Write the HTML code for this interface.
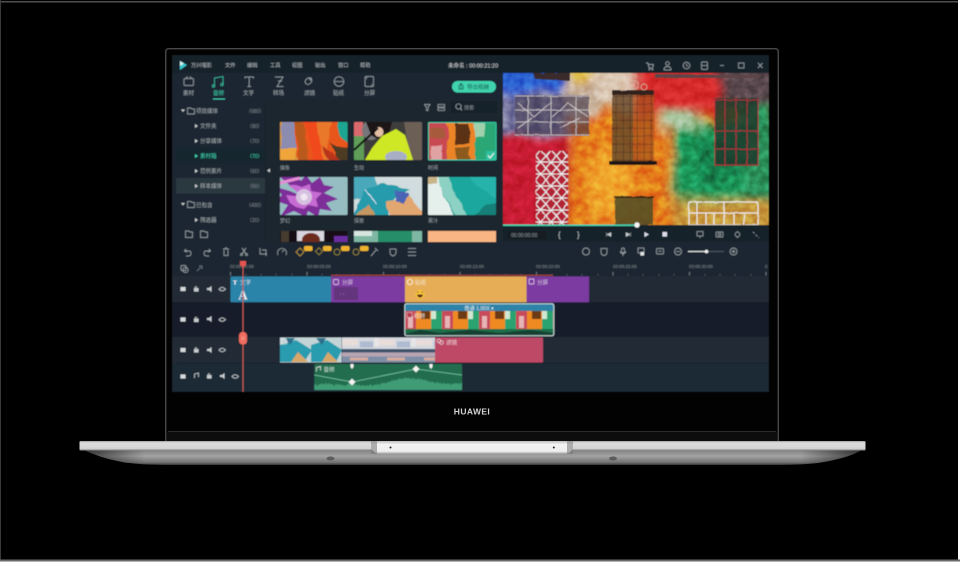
<!DOCTYPE html>
<html><head><meta charset="utf-8"><style>
html,body{margin:0;padding:0;background:#000;width:960px;height:566px;overflow:hidden}
svg{display:block;position:absolute;left:0;top:0}
text{font-family:"Liberation Sans","Noto Sans CJK SC",sans-serif}
.t{font-size:5.5px;fill:#a6aeb3}
.m{font-size:5.2px;fill:#b4bbc0}
.c{font-size:5px;fill:#7d878e}
.l{font-size:5.5px;fill:#e6e6e6}
.i{fill:none;stroke:#a3acb1;stroke-width:.7}
</style></head><body>
<svg width="960" height="566" viewBox="0 0 960 566" xmlns="http://www.w3.org/2000/svg">
<defs>
<filter id="b4" x="-30%" y="-30%" width="160%" height="160%"><feGaussianBlur stdDeviation="4.500"/></filter>
<filter id="s"><feGaussianBlur stdDeviation=".35"/></filter>
<filter id="soft" filterUnits="userSpaceOnUse" x="165" y="48" width="615" height="350"><feGaussianBlur stdDeviation=".42"/></filter>
<filter id="paint" filterUnits="userSpaceOnUse" x="490" y="60" width="290" height="175" color-interpolation-filters="sRGB"><feTurbulence type="fractalNoise" baseFrequency=".03" numOctaves="2" seed="4" result="n"/><feDisplacementMap in="SourceGraphic" in2="n" scale="16" xChannelSelector="R" yChannelSelector="G"/></filter>
<filter id="paintS" filterUnits="userSpaceOnUse" x="490" y="60" width="290" height="175" color-interpolation-filters="sRGB"><feTurbulence type="fractalNoise" baseFrequency=".15" numOctaves="1" seed="7" result="n"/><feDisplacementMap in="SourceGraphic" in2="n" scale="1.500" xChannelSelector="R" yChannelSelector="G"/></filter>
<filter id="mottle" filterUnits="userSpaceOnUse" x="503" y="73" width="266" height="152" color-interpolation-filters="sRGB"><feTurbulence type="fractalNoise" baseFrequency=".12" numOctaves="3" seed="11"/><feColorMatrix values="1.800 0 0 0 -.4  1.800 0 0 0 -.4  1.800 0 0 0 -.4  0 0 0 0 1"/></filter>
<filter id="thumb" filterUnits="userSpaceOnUse" x="270" y="115" width="235" height="105" color-interpolation-filters="sRGB"><feTurbulence type="fractalNoise" baseFrequency=".07" numOctaves="3" seed="3" result="n"/><feDisplacementMap in="SourceGraphic" in2="n" scale="6" xChannelSelector="R" yChannelSelector="G"/></filter>
<filter id="wave" filterUnits="userSpaceOnUse" x="310" y="360" width="156" height="34" color-interpolation-filters="sRGB"><feTurbulence type="fractalNoise" baseFrequency=".7 .05" numOctaves="2" seed="5" result="n"/><feDisplacementMap in="SourceGraphic" in2="n" scale="5" xChannelSelector="R" yChannelSelector="G"/></filter>
<clipPath id="pv"><rect x="503" y="73" width="266" height="152"/></clipPath>
<clipPath id="t1"><rect x="280" y="122" width="67.500" height="38" rx="1"/></clipPath>
<clipPath id="t2"><rect x="354" y="122" width="68" height="38" rx="1"/></clipPath>
<clipPath id="t3"><rect x="428" y="122" width="68" height="38" rx="1"/></clipPath>
<clipPath id="t4"><rect x="280" y="177" width="67.500" height="38" rx="1"/></clipPath>
<clipPath id="t5"><rect x="354" y="177" width="68" height="38" rx="1"/></clipPath>
<clipPath id="t6"><rect x="428" y="177" width="68" height="38" rx="1"/></clipPath>
<clipPath id="t7"><rect x="280" y="231" width="67.500" height="11"/></clipPath>
<clipPath id="c2"><rect x="405" y="304" width="149" height="31.500" rx="2"/></clipPath>
<clipPath id="c3a"><rect x="280" y="337.500" width="61.500" height="25"/></clipPath>
<clipPath id="c3b"><rect x="342" y="337.500" width="93" height="25"/></clipPath>
<clipPath id="wv"><rect x="314.300" y="364" width="147.700" height="26"/></clipPath>
<pattern id="iron" width="7" height="8" patternUnits="userSpaceOnUse"><path d="M0 0H7M0 0V8" stroke="#2a1c18" stroke-width=".8" fill="none"/></pattern>
<pattern id="lat" width="10.500" height="12" patternUnits="userSpaceOnUse"><rect width="10.500" height="12" fill="#b32434"/><path d="M0 0L5 6L0 12M10.500 0L5 6L10.500 12M0 6H10.500" stroke="#eee" stroke-width="1.100" fill="none"/></pattern>
<pattern id="fil" x="405" width="37" height="31" patternUnits="userSpaceOnUse">
<rect x="0" y="0" width="11" height="31" fill="#c8495a"/>
<rect x="11" y="0" width="15" height="31" fill="#ef8a24"/>
<rect x="16" y="1" width="9" height="8" fill="#6c3a16"/>
<rect x="26" y="0" width="11" height="31" fill="#2ba36f"/>
<rect x="26" y="0" width="5" height="9" fill="#cfe7d3"/>
<rect x="3" y="6" width="5" height="12" fill="#e6b4b4"/>
</pattern>
<pattern id="sky" width="37" height="25" patternUnits="userSpaceOnUse" x="342" y="337.500">
<rect width="37" height="12" fill="#d3d7df"/><rect y="2" width="16" height="6" fill="#e9dcd9"/><rect x="18" y="4" width="13" height="6" fill="#aebbd0"/><rect x="32" y="1" width="5" height="8" fill="#e6e4e6"/>
<rect y="11.500" width="37" height="3.500" fill="#3f526c"/><rect y="15" width="37" height="4" fill="#b7a5b3"/><rect y="19" width="37" height="6" fill="#7d8ea6"/><rect x="8" y="20" width="18" height="3" fill="#d9ab9f"/>
</pattern>
<linearGradient id="base" x1="0" y1="0" x2="0" y2="1"><stop offset="0" stop-color="#7c7c7c"/><stop offset=".45" stop-color="#a3a3a3"/><stop offset=".85" stop-color="#707070"/><stop offset="1" stop-color="#333"/></linearGradient>
<linearGradient id="baseH" x1="0" y1="0" x2="1" y2="0"><stop offset="0" stop-color="#000" stop-opacity=".65"/><stop offset=".08" stop-color="#000" stop-opacity="0"/><stop offset=".92" stop-color="#000" stop-opacity="0"/><stop offset="1" stop-color="#000" stop-opacity=".65"/></linearGradient>
<linearGradient id="strip" x1="0" y1="0" x2="0" y2="1"><stop offset="0" stop-color="#a0a0a0"/><stop offset=".2" stop-color="#dcdcdc"/><stop offset=".8" stop-color="#d4d4d4"/><stop offset="1" stop-color="#808080"/></linearGradient>
<linearGradient id="notch" x1="0" y1="0" x2="0" y2="1"><stop offset="0" stop-color="#bbb"/><stop offset=".25" stop-color="#f2f2f2"/><stop offset=".8" stop-color="#eee"/><stop offset="1" stop-color="#9a9a9a"/></linearGradient>
</defs>

<!-- page frame -->
<rect width="960" height="566" fill="#000"/>
<rect x="0" y="1" width="960" height="1.500" fill="#4e4e4e"/>
<rect x="0" y="0" width="1" height="561" fill="#3a3a3a"/>
<rect x="958" y="0" width="2" height="566" fill="#fff"/>
<rect x="0" y="559.500" width="960" height="2" fill="#6a6a6a"/>
<rect x="0" y="561.500" width="960" height="5" fill="#fff"/>

<!-- laptop lid -->
<path d="M165.700 441V52Q165.700 48.700 169 48.700H775Q778.300 48.700 778.300 52V441" fill="#020202" stroke="#484848" stroke-width="1.400"/>
<path d="M168 431.500H776" stroke="#2c2c2c" stroke-width="1"/>
<rect x="167" y="432" width="610" height="9" fill="#0d0d0d"/>
<text x="472" y="414.500" text-anchor="middle" font-size="8.500" font-weight="700" fill="#d4d4d4" letter-spacing=".4" filter="url(#s)">HUAWEI</text>

<!-- base -->
<g filter="url(#s)">
<path d="M82 449H863Q850 458 818 463Q800 465 780 465H165Q140 465 122 462Q100 458 82 449Z" fill="url(#base)"/>
<path d="M82 449H863Q850 458 818 463Q800 465 780 465H165Q140 465 122 462Q100 458 82 449Z" fill="url(#baseH)"/>
<rect x="79.500" y="441" width="786" height="9.500" rx="1" fill="url(#strip)"/>
<path d="M371 441H573V449L568 454H377L371 449Z" fill="url(#notch)"/>
<rect x="371" y="441" width="6" height="13" fill="#777" opacity=".55"/>
<rect x="567" y="441" width="6" height="13" fill="#777" opacity=".55"/>
<circle cx="390.500" cy="447.500" r="1" fill="#222"/>
<circle cx="553.800" cy="447.500" r="1" fill="#222"/>
<ellipse cx="330.500" cy="458.500" rx="4" ry="2" fill="#5c5c5c"/>
<ellipse cx="613" cy="458.500" rx="4" ry="2" fill="#5c5c5c"/>
</g>

<g filter="url(#soft)">
<!-- screen -->
<rect x="172" y="55" width="597" height="337" fill="#1b2731"/>
<rect x="172" y="55" width="597" height="18" fill="#18232c"/>
<rect x="172" y="73" width="331" height="169" fill="#1b2731"/>
<rect x="176" y="100" width="90" height="136" fill="#1c2832"/>
<rect x="265" y="100" width="238" height="142" fill="#1a252f"/>
<rect x="176" y="148" width="90" height="15.500" fill="#17262e"/>
<rect x="176" y="178" width="90" height="15.500" fill="#2c3841"/>

<!-- menu -->
<path d="M180 61L187 65L180 70Z" fill="#39c6ce"/><path d="M180 61L184 63.500L180 66Z" fill="#d9f3f2"/>
<text x="191" y="67" class="m">万兴喵影</text>
<text x="225" y="67" class="m">文件</text><text x="247" y="67" class="m">编辑</text><text x="270" y="67" class="m">工具</text><text x="292" y="67" class="m">视图</text><text x="315" y="67" class="m">输出</text><text x="338" y="67" class="m">窗口</text><text x="360" y="67" class="m">帮助</text>
<text x="448" y="67.500" font-size="5.500" fill="#d0d5d8">未命名 : 00:00:21:20</text>
<!-- window controls -->
<g class="i">
<path d="M646 63H648L649 68H652.500L653.500 64.500H648.500"/><circle cx="649.500" cy="69.500" r=".5"/><circle cx="652.500" cy="69.500" r=".5"/>
<circle cx="667.500" cy="63.500" r="1.800"/><path d="M664 70Q664 66.500 667.500 66.500T671 70Z"/>
<circle cx="686.500" cy="65.500" r="3.300"/><path d="M686.500 63.500V65.500L688 66.500"/>
<rect x="701.500" y="62" width="6" height="7.500" rx="1"/><path d="M701.500 65.500H707.500"/>
<path d="M720 65.500H724"/>
<rect x="738.500" y="63" width="5.500" height="5"/>
<path d="M758 63L762.500 68M762.500 63L758 68"/>
</g>

<!-- tabs -->
<g class="i">
<rect x="184" y="78.500" width="9.500" height="7" rx="1"/><path d="M186 78.500L187.500 76.500M191.500 78.500L190 76.500"/>
<path d="M214.500 86V78L223 76.500V84" stroke="#3fd0ae"/><circle cx="213.500" cy="86" r="1.200" stroke="#3fd0ae"/><circle cx="222" cy="84.500" r="1.200" stroke="#3fd0ae"/>
<path d="M245 78.500V77H253.500V78.500M249.200 77V86.500M247.500 86.500H251"/>
<path d="M275 77H283L277 86.500H283.500M278 81H282"/>
<rect x="305" y="78" width="7" height="5.500" rx="2.700" transform="rotate(-45 309 81)"/><circle cx="310.500" cy="79" r="1"/>
<circle cx="339" cy="81.500" r="4.800"/><path d="M334.500 81.500H343.500"/>
<rect x="365" y="76.500" width="8.500" height="10" rx="1"/><path d="M366.500 79V76.500M372 84V86.500"/>
</g>
<g class="t"><text x="183" y="95">素材</text><text x="213" y="95" style="fill:#3fd0ae">音频</text><text x="243" y="95">文字</text><text x="273" y="95">转场</text><text x="304" y="95">滤镜</text><text x="333" y="95">贴纸</text><text x="364" y="95">分屏</text></g>
<rect x="213" y="98.500" width="12" height="1" fill="#3fd0ae"/>
<rect x="452" y="81" width="44" height="11.500" rx="5.700" fill="#3fd3ae"/>
<path d="M459 85V89H463V85M461 88V83.500M459.500 85L461 83.500L462.500 85" fill="none" stroke="#103a34" stroke-width=".7"/>
<text x="467" y="89" font-size="5.500" fill="#123c36">导出视频</text>

<!-- sidebar -->
<path d="M181 109.500H185L183 112Z" fill="#c5cbce"/>
<path d="M187.500 108H191L192 109H194.500V114H187.500Z" class="i"/>
<text x="196" y="113" class="t">项目媒体</text><text x="246" y="113" class="c">（680）</text>
<path d="M195 124L198 126L195 128Z" fill="#c5cbce"/><text x="200" y="128" class="t">文件夹</text><text x="247" y="128" class="c">（80）</text>
<path d="M195 139L198 141L195 143Z" fill="#c5cbce"/><text x="200" y="143" class="t">分享媒体</text><text x="247" y="143" class="c">（70）</text>
<path d="M195 154L198 156L195 158Z" fill="#3fd0ae"/><text x="200" y="158" class="t" style="fill:#3fd0ae">素材箱</text><text x="247" y="158" class="c" style="fill:#3fd0ae">（70）</text>
<path d="M195 169L198 171L195 173Z" fill="#c5cbce"/><text x="200" y="173" class="t">范例素片</text><text x="247" y="173" class="c">（60）</text>
<path d="M195 184L198 186L195 188Z" fill="#c5cbce"/><text x="200" y="188" class="t">样本媒体</text><text x="247" y="188" class="c">（50）</text>
<path d="M181 203H185L183 205.500Z" fill="#c5cbce"/>
<path d="M187.500 201.500H191L192 202.500H194.500V207.500H187.500Z" class="i"/>
<text x="196" y="207" class="t">已包含</text><text x="246" y="207" class="c">（490）</text>
<path d="M195 218L198 220L195 222Z" fill="#c5cbce"/><text x="200" y="222" class="t">筛选器</text><text x="247" y="222" class="c">（20）</text>
<path d="M185.500 231H189L190 232H192.500V237.500H185.500Z" class="i"/><path d="M200.500 231H204L205 232H207.500V237.500H200.500Z" class="i"/>
<path d="M270 168.500L267 170.500L270 172.500Z" fill="#c5cbce"/>
<path d="M265.500 100V242" stroke="#151f28" stroke-width=".7"/>

<!-- media toolbar -->
<g class="i"><path d="M424.500 104.500H430L428 107.500V110.500H426.500V107.500Z"/><rect x="438" y="104.500" width="6.500" height="2.500"/><rect x="438" y="108" width="6.500" height="2.500"/></g>
<rect x="451" y="101" width="46" height="12" rx="1.500" fill="#17212a"/>
<circle cx="458.500" cy="106.500" r="2.700" class="i"/><path d="M460.500 108.500L462 110.500" class="i"/>
<text x="464" y="109.500" class="c" style="fill:#8d959a">搜索</text>

<!-- thumb 1 -->
<g clip-path="url(#t1)"><rect x="280" y="122" width="68" height="38" fill="#e8561e"/><g filter="url(#thumb)">
<rect x="270" y="115" width="90" height="50" fill="#e8561e"/>
<path d="M270 115H292L298 165H270Z" fill="#d89a3c"/>
<path d="M282 115H294L296 148L288 165H281Z" fill="#8c8cb0"/>
<path d="M292 115Q300 140 298 165H306Q308 138 300 115Z" fill="#b95a1b"/>
<path d="M300 115L330 115Q316 136 325 165H312Q312 138 300 115Z" fill="#f0481c"/>
<path d="M318 115H336Q322 136 332 165H326Q316 138 318 115Z" fill="#e9782a"/>
<path d="M328 140Q338 148 336 165H352V150Q336 146 328 140Z" fill="#4d3a20"/>
<path d="M336 115H352V150Q338 138 336 115Z" fill="#1aa590"/>
<path d="M322 146L347 165H330Z" fill="#b8351b"/>
<path d="M270 148H296L294 165H270Z" fill="#f0a53a"/>
</g></g>
<!-- thumb 2 -->
<g clip-path="url(#t2)"><g filter="url(#s)">
<rect x="354" y="122" width="68" height="38" fill="#3e3c3b"/>
<rect x="354" y="122" width="9" height="14" fill="#d9696d"/>
<rect x="354" y="136" width="10" height="24" fill="#5f9d59"/>
<path d="M404 122H422V160H410Z" fill="#6c5e56"/>
<ellipse cx="371" cy="130" rx="9" ry="10" fill="#77777a"/>
<path d="M366 122H392L388 138Q379 141 371 135Z" fill="#1a1214"/>
<ellipse cx="379" cy="132" rx="4.500" ry="5" fill="#e3bca4"/>
<path d="M365 160L372 148L382 136L396 129L405 135L413 160Z" fill="#cfe826"/>
<ellipse cx="396" cy="157" rx="11" ry="6" fill="#a8aec5"/>
<path d="M354 150L378 128" stroke="#111" stroke-width="2"/>
</g></g>
<!-- thumb 3 -->
<g clip-path="url(#t3)"><rect x="428" y="122" width="68" height="38" fill="#ea8426"/><g filter="url(#thumb)">
<rect x="445" y="115" width="32" height="50" fill="#ea8426"/>
<rect x="422" y="115" width="26" height="50" fill="#c94a52"/>
<rect x="430" y="128" width="14" height="10" fill="#a85a3c"/>
<rect x="455" y="124" width="14" height="20" fill="#5b3216"/>
<rect x="456" y="147" width="14" height="18" fill="#8b5a1f"/>
<rect x="475" y="115" width="27" height="50" fill="#2ba775"/>
<rect x="475" y="115" width="10" height="21" fill="#9fd1ad"/>
<rect x="431" y="145" width="11" height="20" fill="#e0a2a3"/>
</g>
<rect x="486" y="151" width="10" height="9" fill="#2ebf9e"/><path d="M488 155.500L490 158L494 153" fill="none" stroke="#fff" stroke-width="1"/></g>
<rect x="428.500" y="122.500" width="67.500" height="37.500" rx="1" fill="none" stroke="#35c8a7" stroke-width="1"/>
<!-- thumb 4 -->
<g clip-path="url(#t4)"><rect x="280" y="177" width="68" height="38" fill="#95bdc2"/><g filter="url(#s)">
<g transform="translate(304 197)">
<path d="M0 0L-24 -20L-15 -20L-10 -24L-3 -16L2 -22L8 -14L16 -20L20 -12L30 -10L20 -4L34 2L22 6L28 14L16 12L14 20L4 14L2 20L-10 14L-24 20L-16 8L-28 4L-22 -2L-28 -10L-14 -6Z" fill="#7e2f98"/>
<path d="M0 0L-16 -12L-8 -12L-2 -10L6 -13L7 -6L18 -4L12 2L14 10L4 8L0 12L-8 10L-14 6L-18 -2Z" fill="#c66cd2"/>
<circle r="8" fill="#d5c0e0"/><circle r="3.500" fill="#f0e6f2"/>
</g>
<path d="M280 183L300 178" stroke="#e48fd4" stroke-width="3"/>
</g></g>
<!-- thumb 5 -->
<g clip-path="url(#t5)"><rect x="354" y="177" width="68" height="38" fill="#d0dcdd"/><g filter="url(#thumb)">
<path d="M350 170H372L378 192L362 200L350 198Z" fill="#49a9ba"/>
<path d="M364 192Q376 180 396 186L410 190L394 198L386 220H350Z" fill="#269bab"/>
<path d="M386 202L408 194L428 220H392Z" fill="#e2a66f"/>
<path d="M396 190L410 194L404 204L396 200Z" fill="#4a63b5"/>
<path d="M350 220L368 204L378 220Z" fill="#c49763"/>
<path d="M366 190Q372 196 376 204" stroke="#eef" stroke-width="1.200" fill="none"/>
</g></g>
<!-- thumb 6 -->
<g clip-path="url(#t6)"><rect x="428" y="177" width="68" height="38" fill="#1ea79e"/><g filter="url(#thumb)">
<path d="M424 170H438Q442 196 456 220H424Z" fill="#e5efec"/>
<path d="M436 170H448Q452 192 470 220H458Q444 198 436 170Z" fill="#8cd1c3"/>
<path d="M424 170H436L438 184H428Z" fill="#c9b488"/>
<path d="M466 170H502V200Q480 196 466 170Z" fill="#27b3ab"/>
<path d="M470 220Q482 200 502 204V220Z" fill="#137f78"/>
</g></g>
<!-- thumb row 3 -->
<g clip-path="url(#t7)"><rect x="280" y="231" width="68" height="11" fill="#151018"/><rect x="281" y="231" width="8" height="11" fill="#453a2f"/><rect x="297" y="231" width="27" height="10" fill="#d8d5de"/><ellipse cx="311" cy="240" rx="9" ry="7" fill="#6c2c1c"/><rect x="334" y="236" width="14" height="6" fill="#6a2fa0"/></g>
<rect x="354" y="231" width="68" height="11" fill="#7fb7a5"/><rect x="378" y="231" width="34" height="11" fill="#1f8b63" opacity=".9"/><rect x="354" y="231" width="18" height="5" fill="#d6e6df"/>
<rect x="428" y="231" width="68" height="11" fill="#f9b684"/>
<g class="c"><text x="280" y="169.500" style="fill:#9ba3a8">抽象</text><text x="354" y="169.500" style="fill:#9ba3a8">生动</text><text x="428" y="169.500" style="fill:#9ba3a8">时间</text><text x="280" y="222.500" style="fill:#9ba3a8">梦幻</text><text x="354" y="222.500" style="fill:#9ba3a8">探索</text><text x="428" y="222.500" style="fill:#9ba3a8">果汁</text></g>

<!-- preview -->
<g clip-path="url(#pv)">
<rect x="503" y="73" width="266" height="152" fill="#dd7a22"/>
<g filter="url(#paint)"><g filter="url(#b4)">
<rect x="480" y="50" width="92" height="45" fill="#2a5fd0"/>
<rect x="480" y="92" width="90" height="45" fill="#7f7ea5"/>
<rect x="567" y="55" width="30" height="22" fill="#e5c445"/>
<rect x="592" y="55" width="46" height="55" fill="#dcc7b2"/>
<rect x="565" y="78" width="35" height="40" fill="#c9b29c"/>
<rect x="480" y="137" width="88" height="100" fill="#c81d30"/>
<rect x="634" y="55" width="88" height="60" fill="#d62c2a"/>
<rect x="718" y="55" width="70" height="50" fill="#59474e"/>
<rect x="568" y="118" width="104" height="120" fill="#e57e1f"/>
<rect x="590" y="150" width="40" height="70" fill="#f0a32a"/>
<rect x="672" y="122" width="105" height="85" fill="#1b9a5c"/>
<rect x="700" y="140" width="40" height="40" fill="#137a48"/>
<rect x="745" y="105" width="30" height="95" fill="#2a8f5a"/>
<rect x="670" y="200" width="105" height="35" fill="#c7983a"/>
<rect x="660" y="112" width="40" height="18" fill="#a9c8a0"/>
</g></g>
<rect x="503" y="73" width="266" height="152" filter="url(#mottle)" style="mix-blend-mode:overlay" opacity=".28"/>
<g filter="url(#paintS)">
<path d="M533 73H570L570 81L535 79Z" fill="#3a2c2a"/>
<rect x="515" y="95" width="74" height="41" fill="#3d344a" opacity=".6"/>
<path d="M515 96H589M515 110H589M515 122H589M515 135H589M551 96V135M528 96V135M576 96V135" stroke="#b9b4b8" stroke-width="1" fill="none"/>
<path d="M518 103L534 117L550 103M552 117L568 103L588 117M518 128L532 118M560 128L580 118" stroke="#d8cfd0" stroke-width=".8" fill="none"/>
<!-- w2 -->
<rect x="612" y="91" width="21" height="71" fill="#6a4a2a" opacity=".85"/>
<rect x="633" y="91" width="21" height="71" fill="#a8521e" opacity=".75"/>
<rect x="612" y="91" width="42" height="71" fill="url(#iron)"/>
<rect x="612" y="90" width="42" height="5" fill="#33231e"/>
<circle cx="622" cy="86" r="4" fill="none" stroke="#d6b7a1" stroke-width=".7"/><circle cx="634" cy="85" r="4.500" fill="none" stroke="#d6b7a1" stroke-width=".7"/><circle cx="644" cy="87" r="3" fill="none" stroke="#d6b7a1" stroke-width=".7"/>
<rect x="609" y="161" width="48" height="4" fill="#1d1516"/>
<!-- w3 -->
<rect x="715" y="98" width="43" height="68" fill="#1f3a2c" opacity=".85"/>
<path d="M715 100H758M715 131H758M715 149H758M715 165H758M725 98V166M736 98V166M747 98V166M758 98V166M715 98V166" stroke="#a52f3d" stroke-width="1" fill="none"/>
<path d="M655 74L760 75V78H655Z" fill="#5b4446"/>
<rect x="536" y="151" width="32" height="74" fill="url(#lat)"/>
<rect x="615" y="197" width="38" height="28" fill="#4e4a26" opacity=".85"/>
<path d="M614 197H654" stroke="#1a1411" stroke-width="1.500"/>
<path d="M689 202H758M689 213H758M689 225H758M689 202V225M697 202V225M706 213V225M714 213V225M724 202V225M734 213V225M744 213V225M758 202V225" stroke="#ece9e6" stroke-width="1.300" fill="none"/>
</g>
</g>
<!-- controls -->
<rect x="503" y="225" width="266" height="17" fill="#18232c"/>
<rect x="503" y="224.500" width="134" height="1.500" fill="#3fd0ae"/>
<circle cx="637" cy="225" r="2.700" fill="#f4f4f4"/>
<rect x="508" y="231" width="38" height="8" fill="#131c24"/>
<text x="511" y="237" font-size="5" fill="#8d969b">00:00:00:00</text>
<text x="558" y="237.500" font-size="8" fill="#b4bcc0">{</text><text x="577" y="237.500" font-size="8" fill="#b4bcc0">}</text>
<path d="M611 232.500L607 234.500L611 236.500ZM606.500 232.500V236.500" fill="#c5cbce" stroke="#c5cbce" stroke-width=".5"/>
<path d="M626 232.500L630 234.500L626 236.500ZM630.500 232.500V236.500" fill="#c5cbce" stroke="#c5cbce" stroke-width=".5"/>
<path d="M644.500 232L649 234.500L644.500 237Z" fill="#dde"/>
<rect x="662.500" y="232" width="4.500" height="4.500" fill="#dde"/>
<g class="i"><rect x="697" y="231.500" width="6" height="4.500"/><path d="M700 236V238"/><rect x="716" y="232" width="7" height="5" rx=".7"/><circle cx="719.500" cy="234.500" r="1.300"/><circle cx="737.500" cy="234.500" r="2.300"/><path d="M737.500 231V232M737.500 237V238"/><path d="M753 232L759 238" stroke-dasharray="2 2"/></g>

<!-- timeline toolbar -->
<rect x="172" y="242" width="597" height="20" fill="#1b2731"/>
<g class="i">
<path d="M186 249L184.500 251L187 252M185 251H189Q191 251 191 253.500T188 256H186"/>
<path d="M209 249L210.500 251L208 252M210 251H206Q204 251 204 253.500T207 256H209"/>
<path d="M223 249H229M224 250V255.500H228V250M225 248H227"/>
<path d="M242 248L246 254M246 248L242 254"/><circle cx="241.500" cy="254.500" r="1"/><circle cx="246.500" cy="254.500" r="1"/>
<path d="M260 248V254H267M262 250H266V256"/>
<path d="M278 255A4.500 4.500 0 1 1 286 255M282 252L284 250"/>
<path d="M300 248L304 252L300 256L296 252Z" stroke="#d6a847"/>
<rect x="316" y="249" width="5" height="5" transform="rotate(45 319 252)" stroke="#a7903f"/>
<circle cx="337" cy="252" r="3" stroke="#a7903f"/>
<circle cx="356" cy="252" r="3" stroke="#a7903f"/>
<path d="M371 256L376 250M375 248L378 251"/>
<path d="M390 249H396V252Q396 255 393 256Q390 255 390 252Z"/>
<path d="M408 248.500H416M408 252H416M408 255.500H416"/>
<circle cx="586" cy="251.500" r="3.500"/>
<path d="M601 248.500H607V252Q607 255 604 255.500Q601 255 601 252Z"/>
<rect x="621.500" y="248" width="3" height="5" rx="1.500"/><path d="M620 251.500Q623 256 626 251.500M623 254V256"/>
<rect x="638" y="248" width="6" height="5"/><rect x="640.500" y="252" width="3.500" height="3.500" fill="#e2e6e8" stroke="none"/>
<rect x="656.500" y="248.500" width="7" height="5.500" rx="1"/><path d="M658.500 251.200H661.500"/>
<circle cx="678" cy="251.500" r="3.500"/><path d="M676 251.500H680"/>
<circle cx="733.500" cy="251.500" r="3.500"/><path d="M731.500 251.500H735.500M733.500 249.500V253.500"/>
</g>
<rect x="304" y="246" width="8.500" height="5" rx="1.500" fill="#eeb32f"/><rect x="323" y="246" width="8.500" height="5" rx="1.500" fill="#eeb32f"/><rect x="341" y="246" width="8.500" height="5" rx="1.500" fill="#eeb32f"/><rect x="360" y="246" width="8.500" height="5" rx="1.500" fill="#eeb32f"/>
<rect x="688" y="251" width="18" height="1" fill="#e6e6e6"/><rect x="706" y="251" width="18" height="1" fill="#4c565d"/><circle cx="706.500" cy="251.500" r="1.800" fill="#f0f0f0"/>

<!-- ruler -->
<rect x="172" y="262" width="597" height="14" fill="#1b2731"/>
<g font-size="4.500" fill="#7c868c"><text x="230" y="268">00:00:00:00</text><text x="307" y="268">00:00:05:00</text><text x="383" y="268">00:00:10:00</text><text x="460" y="268">00:00:15:00</text><text x="536" y="268">00:00:20:00</text><text x="613" y="268">00:00:25:00</text><text x="689" y="268">00:00:30:00</text><text x="765" y="268">0</text></g>
<path d="M230.500 272V275.500M307 272V275.500M383.500 272V275.500M460 272V275.500M536.500 272V275.500M613 272V275.500M689.500 272V275.500M766 272V275.500" stroke="#8a9398" stroke-width=".7"/>
<path d="M246 274V275.500M261 274V275.500M276 274V275.500M292 274V275.500M322 274V275.500M337 274V275.500M353 274V275.500M368 274V275.500M399 274V275.500M414 274V275.500M429 274V275.500M445 274V275.500M475 274V275.500M490 274V275.500M506 274V275.500M521 274V275.500M552 274V275.500M567 274V275.500M582 274V275.500M598 274V275.500M628 274V275.500M643 274V275.500M659 274V275.500M674 274V275.500M705 274V275.500M720 274V275.500M735 274V275.500M751 274V275.500" stroke="#6a747a" stroke-width=".6"/>
<rect x="331" y="274.700" width="222" height="1.200" fill="#a9423d"/>
<g class="i"><rect x="181" y="265.500" width="5" height="5" rx="1"/><rect x="183" y="267.500" width="5" height="5" rx="2"/><path d="M197 271L201 267M199 266H202V269" stroke="#76828a"/></g>

<!-- tracks -->
<rect x="172" y="276" width="597" height="26" fill="#202c36"/>
<rect x="172" y="302" width="597" height="35" fill="#151e29"/>
<rect x="172" y="337" width="597" height="26" fill="#202c36"/>
<rect x="172" y="363" width="597" height="29" fill="#1f2b35"/>
<path d="M176 362.800H769" stroke="#141c24" stroke-width=".6"/>

<!-- track icons -->
<g>
<rect x="180.500" y="287" width="5" height="4" fill="#d5dadc"/><rect x="180.500" y="317.500" width="5" height="4" fill="#d5dadc"/><rect x="180.500" y="348" width="5" height="4" fill="#d5dadc"/><rect x="180.500" y="374.500" width="5" height="4" fill="#d5dadc"/>
<path d="M194 288H198.500V291.500H194ZM195 288V286.500H197.500" fill="#c5cbce"/><path d="M194 318.500H198.500V322H194ZM195 318.500V317H197.500" fill="#c5cbce"/><path d="M194 349H198.500V352.500H194ZM195 349V347.500H197.500" fill="#c5cbce"/><path d="M207 375H211.500V378.500H207ZM208 375V373.500H210.500" fill="#c5cbce"/>
<path d="M207 288H209L211.500 286V292L209 290H207Z" fill="#c5cbce"/><path d="M207 318H209L211.500 316V322L209 320H207Z" fill="#c5cbce"/><path d="M207 349H209L211.500 347V353L209 351H207Z" fill="#c5cbce"/><path d="M220 375H222L224.500 373V379L222 377H220Z" fill="#c5cbce"/>
<g fill="none" stroke="#c5cbce" stroke-width=".8"><path d="M219 289.200Q222 285.500 225.500 289.200Q222 292.500 219 289.200Z"/><path d="M219 319.700Q222 316 225.500 319.700Q222 323 219 319.700Z"/><path d="M219 350Q222 346.500 225.500 350Q222 353.500 219 350Z"/><path d="M232 376.500Q235 373 238.500 376.500Q235 380 232 376.500Z"/><path d="M194.500 378V374L198.500 373V377"/></g>
</g>

<!-- clips track 1 -->
<rect x="230.500" y="276.500" width="100.500" height="25.800" rx="1" fill="#2a83a8"/>
<text x="233" y="284.500" font-size="6" font-weight="700" fill="#fff" style="font-family:'Liberation Serif',serif">T</text>
<text x="240" y="284.500" class="l" style="fill:#cfe2ea">文字</text>
<text x="243" y="299.500" text-anchor="middle" font-size="13" font-weight="700" fill="#e8eef1" style="font-family:'Liberation Serif',serif">A</text>
<rect x="331" y="276.500" width="74" height="25.800" fill="#7b3aa1"/>
<rect x="333.500" y="279.500" width="5" height="5" rx=".7" fill="none" stroke="#e6d5ef" stroke-width=".7"/>
<text x="342" y="284.500" class="l" style="fill:#d6c2e2">分屏</text>
<rect x="334" y="287" width="24" height="13" rx="1" fill="#63367d"/>
<text x="340" y="295.500" font-size="4.500" fill="#a58ab3">‹  ›</text>
<rect x="405" y="276.500" width="121.500" height="25.800" fill="#e6ad57"/>
<circle cx="410" cy="282" r="2.700" fill="none" stroke="#fff" stroke-width=".7"/>
<text x="415" y="284.500" class="l" style="fill:#f4e3c4">贴纸</text>
<circle cx="420" cy="294.300" r="4.500" fill="#f5c33b"/><path d="M417 294.500H423Q422.500 297.500 420 297.500T417 294.500Z" fill="#5d2b1a"/><path d="M417 292.500L418.500 291.800M423 292.500L421.500 291.800" stroke="#4a2a12" stroke-width=".7"/>
<rect x="526.500" y="276.500" width="62.500" height="25.800" fill="#7b3aa1"/>
<rect x="529" y="279" width="5" height="5" rx=".7" fill="none" stroke="#e6d5ef" stroke-width=".7"/>
<text x="537" y="284.500" class="l" style="fill:#d6c2e2">分屏</text>

<!-- clip 2 -->
<g clip-path="url(#c2)">
<rect x="405" y="304" width="149" height="32" fill="#1f7a55"/>
<rect x="405" y="304" width="149" height="7" fill="#2d83a8"/>
<rect x="405" y="311" width="149" height="18" fill="url(#fil)"/>
<rect x="405" y="329" width="149" height="7" fill="#1c6e4a"/>
<path d="M405 334L420 330L440 333L470 330L500 333L530 330L554 333V336H405Z" fill="#153f30"/>
</g>
<rect x="404.800" y="303.800" width="149" height="32" rx="2" fill="none" stroke="#cfe3df" stroke-width="1"/>
<text x="479" y="309.800" text-anchor="middle" font-size="5.200" fill="#e3f0f5">普通 1.00X ▾</text>
<rect x="407" y="312.500" width="5" height="5" fill="#b43b4c" stroke="#eee" stroke-width=".4"/>
<text x="414" y="318" class="l" style="fill:#f5e7d6">视频</text>

<!-- clips track 3 -->
<g clip-path="url(#c3a)">
<rect x="280" y="337.500" width="62" height="25" fill="#c3d4d6"/>
<path d="M280 345L296 340L312 350L304 362H280Z" fill="#2c9caf"/><path d="M298 352L308 362H291Z" fill="#d8a767"/>
<path d="M311 345L327 340L342 350L336 362H311Z" fill="#2c9caf"/><path d="M328 352L338 362H322Z" fill="#d8a767"/>
<path d="M285 338H295L290 345Z" fill="#2f6f8a"/><path d="M316 338H326L322 345Z" fill="#2f6f8a"/>
</g>
<rect x="281.500" y="339" width="5" height="5" rx=".7" fill="none" stroke="#eee" stroke-width=".6"/>
<g clip-path="url(#c3b)"><rect x="342" y="337.500" width="93" height="25" fill="url(#sky)"/></g>
<rect x="344" y="339" width="5" height="5" rx=".7" fill="none" stroke="#ddd" stroke-width=".6"/>
<rect x="435" y="337.500" width="108" height="25" rx=".7" fill="#bd4a66"/>
<circle cx="439" cy="341" r="1.800" fill="none" stroke="#f5dbe2" stroke-width=".7"/><circle cx="441.500" cy="342.500" r="1.800" fill="none" stroke="#f5dbe2" stroke-width=".7"/>
<text x="446" y="344.500" class="l" style="fill:#f0cdd6">滤镜</text>

<!-- audio -->
<rect x="314.300" y="364" width="147.700" height="26" rx="1" fill="#226d4e"/>
<g clip-path="url(#wv)"><path d="M305 392V386L325 384L340 385L350 384L365 386L385 383L395 380L405 378L420 379L432 382L445 384L470 383V392Z" fill="#3f9c74" filter="url(#wave)"/></g>
<path d="M314.300 375L352 382L416 369L462 375" fill="none" stroke="#7ac7a7" stroke-width=".8"/>
<path d="M352 378.500L355.500 382L352 385.500L348.500 382Z" fill="#f4f4f4"/>
<path d="M416 365.500L419.500 369L416 372.500L412.500 369Z" fill="#f4f4f4"/>
<path d="M350.500 364H353.500V367L352 369L350.500 367Z" fill="#f4f4f4"/>
<path d="M429.500 364H432.500V367L431 369L429.500 367Z" fill="#f4f4f4"/>
<path d="M316.500 371.500V367.500L320.500 366.500V370.500" fill="none" stroke="#eee" stroke-width=".7"/>
<text x="323.500" y="371.500" class="l" style="fill:#cce4d9">音频</text>

<!-- playhead -->
<path d="M243 264V392" stroke="#cb5a52" stroke-width="1"/>
<path d="M240 261H246V265L243 267.500L240 265Z" fill="#e4574f"/>
<rect x="239" y="332" width="8" height="12.500" rx="3.500" fill="#ef6d5f"/>
<path d="M241.500 336.500L244.500 340M244.500 336.500L241.500 340" stroke="#f8c0b6" stroke-width=".5"/>
</g>
</svg>
</body></html>
